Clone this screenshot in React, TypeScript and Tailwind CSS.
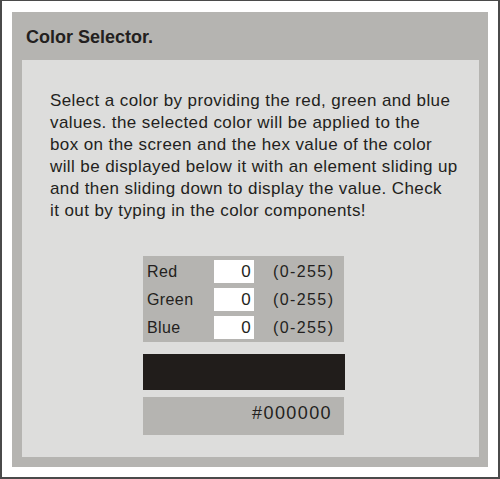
export default function App() {
  const rows = ['Red', 'Green', 'Blue'];
  return (
    <div
      className="w-[500px] h-[479px] bg-white border-[#4a4a4a] border-l-2 border-r-2 border-t border-b-2 pt-[11px] pl-[10px] pr-[10px] pb-[10px] text-[#231f20]"
      style={{ fontFamily: '"Liberation Sans", Arial, sans-serif' }}
    >
      <div className="h-full bg-[#b5b4b1] flex flex-col pl-[10px] pr-[9px] pb-[10px]">
        {/* Header */}
        <div className="h-[48px] shrink-0 flex items-center pl-[4px] pt-[2px]">
          <h1 className="text-[18px] font-bold">Color Selector.</h1>
        </div>

        {/* Body */}
        <div className="flex-1 bg-[#dddddc] flex flex-col pt-[30px] pl-[28px]">
          <p className="text-[17px] leading-[22px] tracking-[0.4px]">
            Select a color by providing the red, green and blue
            <br />
            values. the selected color will be applied to the
            <br />
            box on the screen and the hex value of the color
            <br />
            will be displayed below it with an element sliding up
            <br />
            and then sliding down to display the value. Check
            <br />
            it out by typing in the color components!
          </p>

          <div className="ml-[93px] mt-[34px] w-[201px] bg-[#b5b4b1] pt-[4px] pb-[3px] pl-[4px] flex flex-col gap-[5px]">
            {rows.map((r) => (
              <div key={r} className="h-[23px] flex items-center text-[16px] tracking-[0.4px]">
                <span className="w-[67px]">{r}</span>
                <input
                  readOnly
                  value="0"
                  className="w-[40px] h-[23px] bg-white text-right pr-[3px] text-[17px] outline-none"
                />
                <span className="pl-[19px] tracking-[1.4px]">(0-255)</span>
              </div>
            ))}
          </div>

          <div className="ml-[93px] mt-[12px] w-[202px] h-[36px] bg-[#211d1b]" />

          <div className="ml-[93px] mt-[7px] w-[201px] h-[38px] bg-[#b5b4b1] flex items-center justify-end pr-[12px] pb-[5px]">
            <span className="text-[18px] tracking-[1.4px]">#000000</span>
          </div>
        </div>
      </div>
    </div>
  );
}
